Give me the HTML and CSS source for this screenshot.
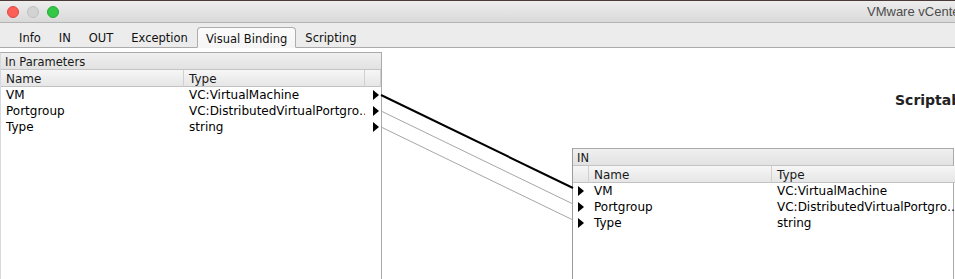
FILE: index.html
```html
<!DOCTYPE html>
<html lang="en">
<head>
    <meta charset="UTF-8">
    <meta name="viewport" content="width=device-width, initial-scale=1.0">
    <title>VMware vCenter Orchestrator</title>
    <link rel="stylesheet" href="styles.css">
</head>
<body>
<div class="window">

    <div class="titlebar">
        <div class="lights">
            <span class="light red"></span>
            <span class="light grey"></span>
            <span class="light green"></span>
        </div>
        <div class="title">VMware vCenter Orchestrator</div>
    </div>

    <ul class="tabs">
        <li>Info</li>
        <li>IN</li>
        <li>OUT</li>
        <li>Exception</li>
        <li class="active">Visual Binding</li>
        <li>Scripting</li>
    </ul>

    <div class="canvas">
        <section class="panel panel-params">
            <div class="panel-head">In Parameters</div>
            <div class="grid grid-params">
                <div class="col-head">Name</div>
                <div class="col-head">Type</div>
                <div class="col-head"></div>

                <div class="cell">VM</div>
                <div class="cell">VC:VirtualMachine</div>
                <div class="cell pin-cell"><svg class="pin" viewBox="0 0 6 10"><path d="M0 0L6 5L0 10Z"/></svg></div>

                <div class="cell">Portgroup</div>
                <div class="cell">VC:DistributedVirtualPortgro…</div>
                <div class="cell pin-cell"><svg class="pin" viewBox="0 0 6 10"><path d="M0 0L6 5L0 10Z"/></svg></div>

                <div class="cell">Type</div>
                <div class="cell">string</div>
                <div class="cell pin-cell"><svg class="pin" viewBox="0 0 6 10"><path d="M0 0L6 5L0 10Z"/></svg></div>
            </div>
        </section>

        <div class="task">
            <h2 class="task-title">Scriptable task</h2>
            <section class="panel panel-in">
                <div class="panel-head">IN</div>
                <div class="grid grid-in">
                    <div class="col-head"></div>
                    <div class="col-head">Name</div>
                    <div class="col-head">Type</div>

                    <div class="cell pin-cell"><svg class="pin" viewBox="0 0 6 10"><path d="M0 0L6 5L0 10Z"/></svg></div>
                    <div class="cell">VM</div>
                    <div class="cell">VC:VirtualMachine</div>

                    <div class="cell pin-cell"><svg class="pin" viewBox="0 0 6 10"><path d="M0 0L6 5L0 10Z"/></svg></div>
                    <div class="cell">Portgroup</div>
                    <div class="cell">VC:DistributedVirtualPortgro…</div>

                    <div class="cell pin-cell"><svg class="pin" viewBox="0 0 6 10"><path d="M0 0L6 5L0 10Z"/></svg></div>
                    <div class="cell">Type</div>
                    <div class="cell">string</div>
                </div>
            </section>
        </div>
    </div>

    <!-- bindings between the parameters and the task inputs -->
    <svg class="links" width="955" height="279">
        <line x1="381" y1="95" x2="573" y2="188" class="link selected"/>
        <line x1="381" y1="111" x2="573" y2="204" class="link"/>
        <line x1="381" y1="127" x2="573" y2="220" class="link"/>
    </svg>

</div>
</body>
</html>
```

FILE: styles.css
```css
body {
    margin: 0;
    padding: 0;
    background-color: #ffffff;
    font-family: "DejaVu Sans", "Liberation Sans", sans-serif;
    overflow: hidden;
}

.window {
    position: relative;
    width: 955px;
    height: 279px;
    overflow: hidden;
    background-color: #ffffff;
}

.titlebar {
    display: flex;
    align-items: center;
    justify-content: space-between;
    height: 21px;
    border-top: 1px solid #4a3a38;
    border-bottom: 1px solid #b4b4b4;
    background: linear-gradient(#ededed, #d9d9d9);
    padding-left: 7px;
}

.lights {
    display: flex;
    gap: 8px;
}

.light {
    width: 12px;
    height: 12px;
    border-radius: 50%;
    box-sizing: border-box;
}

.light.red {
    background-color: #fc5f57;
    border: 1px solid #df4744;
}

.light.grey {
    background-color: #d3d3d3;
    border: 1px solid #c0c0c0;
}

.light.green {
    background-color: #33c748;
    border: 1px solid #27aa35;
}

.title {
    flex: none;
    width: 88px;
    overflow: hidden;
    white-space: nowrap;
    font-family: "Liberation Sans", Arial, sans-serif;
    font-size: 13px;
    color: #4c4c4c;
}

.tabs {
    display: flex;
    align-items: flex-end;
    list-style: none;
    margin: 0;
    padding: 0 0 0 10px;
    height: 24px;
    background-color: #ececec;
    border-bottom: 1px solid #ababab;
}

.tabs li {
    box-sizing: border-box;
    padding: 2px 9px 0 9px;
    height: 20px;
    line-height: 18px;
    font-size: 11.5px;
    color: #111111;
}

.tabs li.active {
    margin: 0 0 -1px 0;
    height: 21px;
    padding: 2px 8px 0 8px;
    background: linear-gradient(#fbfbfb, #f5f5f5);
    border: 1px solid #adadad;
    border-bottom: 1px solid #f5f5f5;
    border-radius: 4px 4px 0 0;
}

.canvas {
    display: flex;
    padding-top: 4px;
}

.panel {
    box-sizing: border-box;
    border: 1px solid #a9a9a9;
    background-color: #ffffff;
    height: 400px;
    font-size: 12px;
}

.panel-params {
    flex: none;
    width: 382px;
    border-left-color: #d8d8e0;
}

.panel-head {
    box-sizing: border-box;
    height: 17px;
    line-height: 16px;
    padding: 1px 0 0 4px;
    font-size: 11.5px;
    color: #1a1a1a;
    background: linear-gradient(#f0f0f0, #e2e2e2);
    border-bottom: 1px solid #c4c4c4;
}

.grid {
    display: grid;
    grid-template-rows: 17px;
    grid-auto-rows: 16px;
}

.grid-params {
    grid-template-columns: 183px 181px 1fr;
}

.grid-in {
    grid-template-columns: 16px 183px 1fr;
}

.col-head {
    box-sizing: border-box;
    line-height: 16px;
    padding: 1px 0 0 5px;
    color: #1a1a1a;
    background: linear-gradient(#f6f6f6, #e6e6e6);
    border-bottom: 1px solid #c2c2c2;
    border-right: 1px solid #cfcfcf;
    white-space: nowrap;
    overflow: hidden;
}

.cell {
    line-height: 17px;
    padding-left: 5px;
    color: #000000;
    white-space: nowrap;
    overflow-x: clip;
    overflow-y: visible;
}

.pin-cell {
    display: flex;
    align-items: center;
}

.grid-params .pin-cell {
    padding-left: 8px;
}

.grid-in .pin-cell {
    padding-left: 5px;
}

.pin {
    width: 6px;
    height: 10px;
    fill: #000000;
}

.task {
    flex: 1;
    min-width: 0;
    margin-left: 190px;
}

.task-title {
    margin: 39px 0 0 0;
    padding-left: 323px;
    height: 18px;
    line-height: 18px;
    font-size: 14px;
    font-weight: bold;
    color: #222222;
    white-space: nowrap;
    overflow: hidden;
}

.panel-in {
    width: 382px;
    margin-top: 39px;
    border-left-color: #9b9b9b;
}

.links {
    position: absolute;
    top: 0;
    left: 0;
    pointer-events: none;
}

.link {
    stroke: #a6a6a6;
    stroke-width: 1;
}

.link.selected {
    stroke: #000000;
    stroke-width: 2;
}
```
